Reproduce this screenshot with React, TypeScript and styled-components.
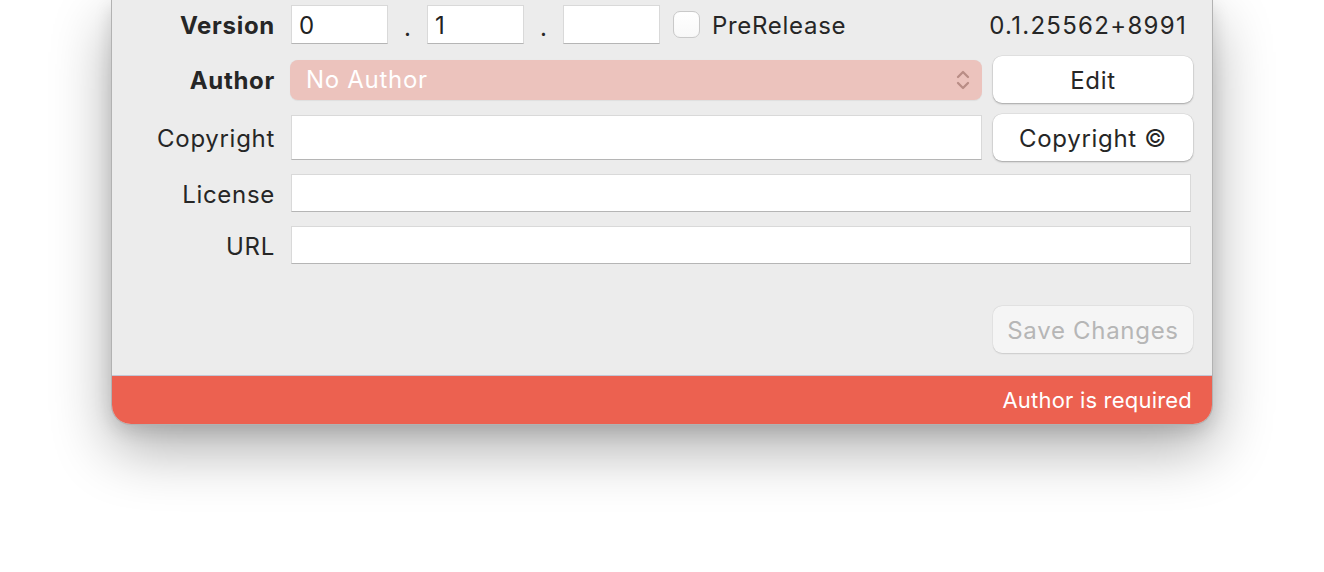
import React from 'react';
import styled, { createGlobalStyle } from 'styled-components';

const GlobalStyle = createGlobalStyle`
  html, body {
    margin: 0;
    padding: 0;
    background: #ffffff;
    overflow: hidden;
  }
  body {
    font-family: 'Inter', 'Liberation Sans', sans-serif;
  }
`;

const App: React.FC = () => {
  return (
    <>
      <GlobalStyle />
      <Page>
        <Window>
          <Form>
            <Row $mt={5} $h={39}>
              <Label $bold>Version</Label>
              <VersionLine>
                <SmallField defaultValue="0" />
                <Dot>.</Dot>
                <SmallField defaultValue="1" />
                <Dot>.</Dot>
                <SmallField defaultValue="" />
                <Check />
                <CheckText>PreRelease</CheckText>
                <BuildString>0.1.25562+8991</BuildString>
              </VersionLine>
            </Row>

            <Row $mt={12} $h={47}>
              <Label $bold>Author</Label>
              <Split>
                <Popup>
                  <span>No Author</span>
                  <svg width="14" height="24" viewBox="0 0 14 24" fill="none">
                    <path d="M2 9 L7 4 L12 9" stroke="#b98d86" strokeWidth="2.3" strokeLinecap="round" strokeLinejoin="round" />
                    <path d="M2 15 L7 20 L12 15" stroke="#b98d86" strokeWidth="2.3" strokeLinecap="round" strokeLinejoin="round" />
                  </svg>
                </Popup>
                <Button>Edit</Button>
              </Split>
            </Row>

            <Row $mt={11} $h={47}>
              <Label>Copyright</Label>
              <Split>
                <Field $h={45} />
                <Button>Copyright ©</Button>
              </Split>
            </Row>

            <Row $mt={13} $h={38}>
              <Label>License</Label>
              <Field $h={38} $wide />
            </Row>

            <Row $mt={14} $h={38}>
              <Label>URL</Label>
              <Field $h={38} $wide />
            </Row>

            <Footer>
              <Button $disabled>Save Changes</Button>
            </Footer>
          </Form>
          <ErrorBar>Author is required</ErrorBar>
        </Window>
      </Page>
    </>
  );
};

export default App;

const Page = styled.div`
  width: 1324px;
  height: 572px;
  padding-left: 111px;
  box-sizing: border-box;
`;

const Window = styled.div`
  box-sizing: border-box;
  width: 1102px;
  background: #ececec;
  border: 1px solid #b2b2b2;
  border-top: none;
  border-radius: 0 0 20px 20px;
  overflow: hidden;
  box-shadow: 0 24px 60px rgba(0, 0, 0, 0.32), 0 6px 18px rgba(0, 0, 0, 0.12);
  color: #262626;
`;

const Form = styled.div`
  display: flex;
  flex-direction: column;
  padding-right: 19px;
`;

const Row = styled.div<{ $mt: number; $h: number }>`
  display: grid;
  grid-template-columns: 163px 1fr;
  column-gap: 16px;
  align-items: center;
  margin-top: ${p => p.$mt}px;
  height: ${p => p.$h}px;
`;

const Label = styled.div<{ $bold?: boolean }>`
  text-align: right;
  font-size: 24px;
  font-weight: ${p => (p.$bold ? 700 : 400)};
  letter-spacing: 0.7px;
  padding-top: 2px;
`;

const VersionLine = styled.div`
  display: flex;
  align-items: center;
  height: 100%;
`;

const Field = styled.input<{ $h?: number; $wide?: boolean }>`
  box-sizing: border-box;
  height: ${p => p.$h ?? 39}px;
  width: ${p => (p.$wide ? 'calc(100% - 2px)' : '100%')};
  background: #ffffff;
  border: 1px solid #d9d9d9;
  border-bottom: 1px solid #b5b5b5;
  border-radius: 0;
  outline: none;
  padding: 2px 7px 0;
  font-family: inherit;
  font-size: 24px;
  color: #222;
`;

const SmallField = styled(Field)`
  width: 97px;
  height: 39px;
  flex: none;
`;

const Dot = styled.span`
  width: 39px;
  text-align: center;
  font-size: 24px;
  line-height: 1;
  padding-top: 6px;
`;

const Check = styled.div`
  flex: none;
  width: 25px;
  height: 25px;
  margin-left: 13px;
  border: 1px solid #c9c9c9;
  border-radius: 7px;
  background: linear-gradient(#ffffff, #f8f8f8);
  box-shadow: inset 0 0 1px rgba(0, 0, 0, 0.05);
`;

const CheckText = styled.span`
  margin-left: 12px;
  font-size: 24px;
  letter-spacing: 0.7px;
  padding-top: 2px;
`;

const BuildString = styled.span`
  margin-left: auto;
  margin-right: 6px;
  font-size: 24px;
  letter-spacing: 1.3px;
  padding-top: 2px;
`;

const Split = styled.div`
  display: grid;
  grid-template-columns: 1fr 200px;
  column-gap: 11px;
  align-items: center;
  height: 100%;
`;

const Popup = styled.div`
  height: 40px;
  margin-left: -1px;
  border-radius: 8px;
  background: #ecc3bd;
  display: flex;
  align-items: center;
  justify-content: space-between;
  padding: 0 12px 0 16px;
  color: #ffffff;
  font-size: 24px;
  letter-spacing: 0.7px;
  box-shadow: 0 0.5px 1px rgba(0, 0, 0, 0.06);
`;

const Button = styled.div<{ $disabled?: boolean }>`
  box-sizing: border-box;
  width: 200px;
  height: 47px;
  padding-top: 2px;
  border-radius: 9px;
  background: ${p => (p.$disabled ? '#f5f5f5' : '#ffffff')};
  color: ${p => (p.$disabled ? '#b6b6b6' : '#262626')};
  display: flex;
  align-items: center;
  justify-content: center;
  font-size: 24px;
  letter-spacing: 0.7px;
  box-shadow: ${p =>
    p.$disabled
      ? '0 0.5px 1.5px rgba(0, 0, 0, 0.12), 0 0 0 0.5px rgba(0, 0, 0, 0.04)'
      : '0 1px 2px rgba(0, 0, 0, 0.28), 0 0 0 0.5px rgba(0, 0, 0, 0.08)'};
`;

const Footer = styled.div`
  display: flex;
  justify-content: flex-end;
  margin-top: 42px;
  margin-bottom: 22px;
`;

const ErrorBar = styled.div`
  border-top: 1px solid #c2c5d4;
  background: #ec6150;
  color: #ffffff;
  height: 48px;
  display: flex;
  align-items: center;
  justify-content: flex-end;
  padding-right: 20px;
  font-size: 22px;
  letter-spacing: 0.2px;
`;
